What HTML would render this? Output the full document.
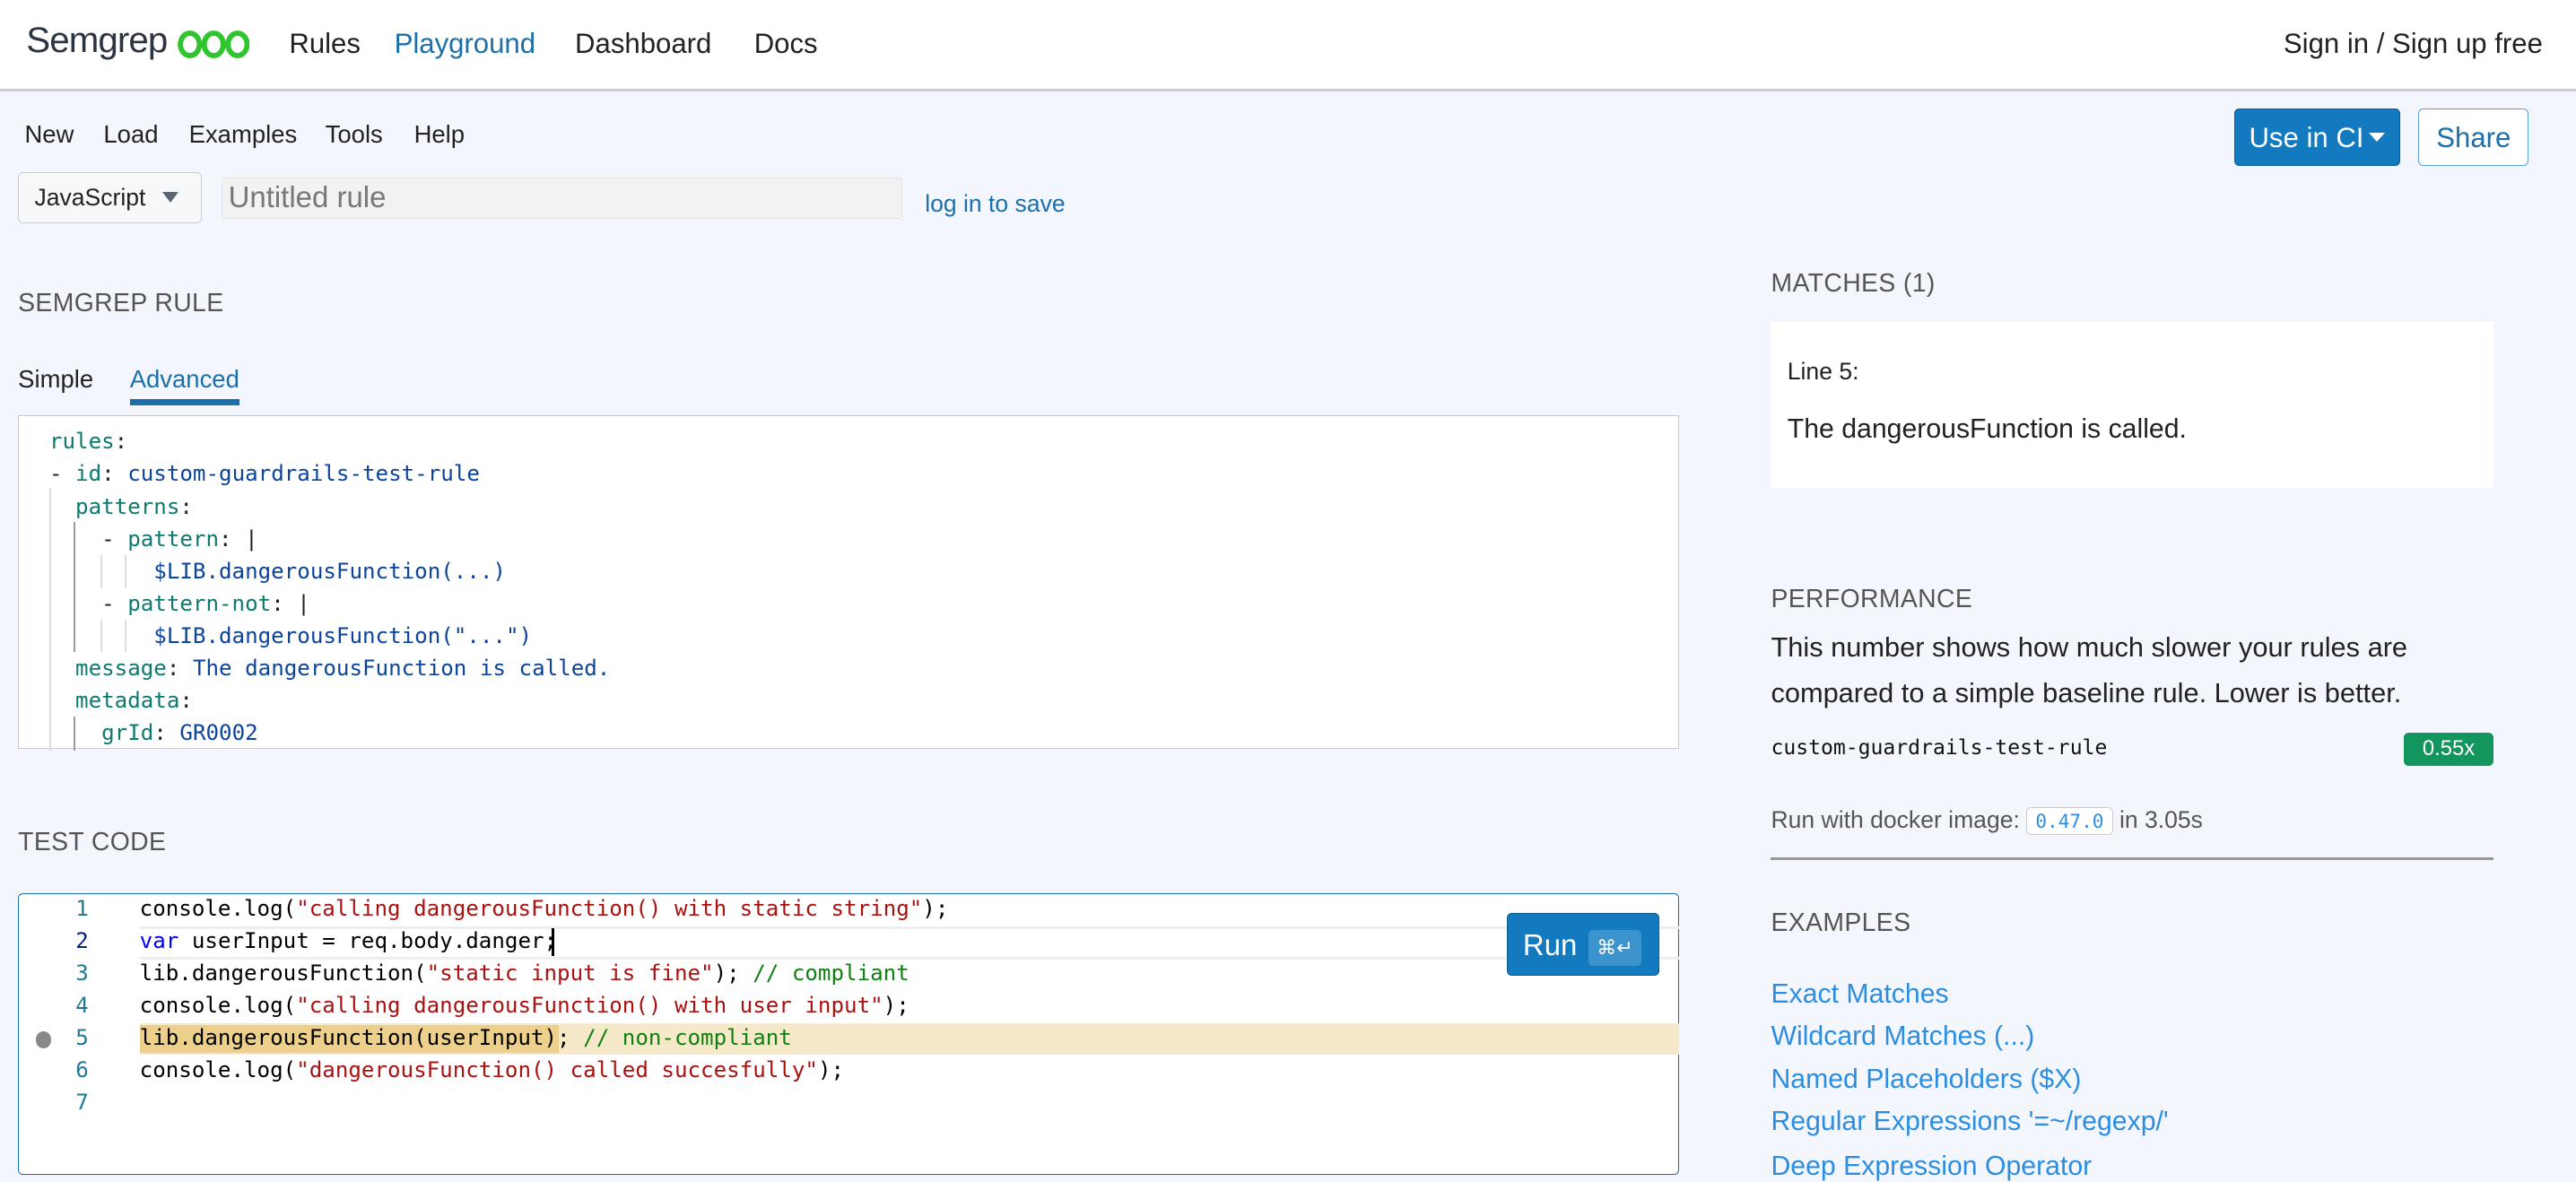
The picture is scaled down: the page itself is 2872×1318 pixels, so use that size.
<!DOCTYPE html>
<html><head><meta charset="utf-8">
<style>
html{zoom:1.8316}
body{margin:0;width:1568px;height:706px;overflow:hidden;background:#f3f7fd;font-family:"Liberation Sans",sans-serif;position:relative;color:#222}
.a{position:absolute;white-space:nowrap}
pre.a{white-space:pre}
.hdr{position:absolute;left:0;top:0;width:1568px;height:54px;background:#fff;border-bottom:2px solid #c9ccd0}
.nav{font-size:17px;top:17px;color:#222}
.mono{font-family:"DejaVu Sans Mono","Liberation Mono",monospace}
.h{font-size:15.5px;color:#555;letter-spacing:0.2px}
.code{font-size:13.2px;line-height:19.7px}
.k{color:#0e7a6e}.v{color:#0b449a}.s{color:#a11}.c{color:#108010}.kw{color:#00f}
.ex{font-size:16.5px;color:#2d8ee0}
</style></head><body>
<div class="hdr"></div>
<div class="a" style="left:16px;top:12px;font-size:22px;color:#2b3440;letter-spacing:-0.5px">Semgrep</div>
<svg class="a" style="left:108px;top:18px" width="44" height="18" viewBox="0 0 44 18"><g fill="none" stroke="#2ec52e" stroke-width="3.2"><ellipse cx="7.5" cy="9" rx="5.8" ry="6.8"/><ellipse cx="22" cy="9" rx="5.8" ry="6.8"/><ellipse cx="36.5" cy="9" rx="5.8" ry="6.8"/></g></svg>
<div class="a nav" style="left:176px">Rules</div>
<div class="a nav" style="left:240px;color:#1c6fa9">Playground</div>
<div class="a nav" style="left:350px">Dashboard</div>
<div class="a nav" style="left:459px">Docs</div>
<div class="a nav" style="left:1390px">Sign in / Sign up free</div>

<div class="a" style="left:15px;top:73px;font-size:15px">New</div>
<div class="a" style="left:63px;top:73px;font-size:15px">Load</div>
<div class="a" style="left:115px;top:73px;font-size:15px">Examples</div>
<div class="a" style="left:198px;top:73px;font-size:15px">Tools</div>
<div class="a" style="left:252px;top:73px;font-size:15px">Help</div>

<div class="a" style="left:11px;top:105px;width:111px;height:30px;border:1px solid #c9cdd2;border-radius:3px;background:#f7f8fa"></div>
<div class="a" style="left:21px;top:112px;font-size:14.5px">JavaScript</div>
<div class="a" style="left:99px;top:117px;width:0;height:0;border-left:5px solid transparent;border-right:5px solid transparent;border-top:7px solid #5a6572"></div>
<div class="a" style="left:135px;top:108px;width:413px;height:24px;background:#f2f2f2;border:1px solid #e4e4e4;border-radius:2px"></div>
<div class="a" style="left:139px;top:110px;font-size:18px;color:#777">Untitled rule</div>
<div class="a" style="left:563px;top:116px;font-size:14.5px;color:#1c6fa9">log in to save</div>

<div class="a" style="left:1360px;top:66px;width:100px;height:34px;background:#137abf;border:1px solid #0e5a8c;border-radius:3px"></div>
<div class="a" style="left:1369px;top:74px;font-size:17px;color:#fff">Use in CI</div>
<div class="a" style="left:1442px;top:81px;border-left:5px solid transparent;border-right:5px solid transparent;border-top:6px solid #fff"></div>
<div class="a" style="left:1472px;top:66px;width:66px;height:34px;background:#fff;border:1px solid #5aa0d6;border-radius:3px"></div>
<div class="a" style="left:1483px;top:74px;font-size:17px;color:#1c6fa9">Share</div>

<div class="a h" style="left:11px;top:176px">SEMGREP RULE</div>
<div class="a" style="left:11px;top:222px;font-size:15px">Simple</div>
<div class="a" style="left:79px;top:222px;font-size:15px;color:#1c6fa9">Advanced</div>
<div class="a" style="left:79px;top:243px;width:67px;height:4px;background:#1c6fa9"></div>

<div class="a" style="left:11px;top:253px;width:1010px;height:202px;background:#fff;border:1px solid #c8c8c8"></div>
<div class="a" style="left:30px;top:297px;width:1px;height:160px;background:#ddd"></div>
<div class="a" style="left:45px;top:318px;width:1px;height:79px;background:#999"></div>
<div class="a" style="left:61px;top:338px;width:1px;height:20px;background:#ddd"></div>
<div class="a" style="left:76px;top:338px;width:1px;height:20px;background:#ddd"></div>
<div class="a" style="left:61px;top:377px;width:1px;height:20px;background:#ddd"></div>
<div class="a" style="left:76px;top:377px;width:1px;height:20px;background:#ddd"></div>
<div class="a" style="left:45px;top:436px;width:1px;height:21px;background:#999"></div>
<pre class="a mono code" style="left:30px;top:259px;margin:0"><span class="k">rules</span>:
- <span class="k">id</span>: <span class="v">custom-guardrails-test-rule</span>
  <span class="k">patterns</span>:
    - <span class="k">pattern</span>: |
        <span class="v">$LIB.dangerousFunction(...)</span>
    - <span class="k">pattern-not</span>: |
        <span class="v">$LIB.dangerousFunction("...")</span>
  <span class="k">message</span>: <span class="v">The dangerousFunction is called.</span>
  <span class="k">metadata</span>:
    <span class="k">grId</span>: <span class="v">GR0002</span></pre>

<div class="a h" style="left:11px;top:504px">TEST CODE</div>
<div class="a" style="left:11px;top:544px;width:1010px;height:170px;background:#fff;border:1px solid #1b6ea8;border-radius:3px"></div>
<div class="a" style="left:85px;top:564px;width:937px;height:17px;border-top:2px solid #eee;border-bottom:2px solid #eee"></div>
<div class="a" style="left:85px;top:623px;width:937px;height:19px;background:#f6e9c9"></div>
<div class="a" style="left:85px;top:624px;width:255px;height:17px;background:#ecd08b"></div>
<div class="a" style="left:22px;top:628px;width:9px;height:10px;border-radius:50%;background:#888"></div>
<div class="a" style="left:336px;top:565px;width:1.5px;height:17px;background:#000"></div>
<pre class="a mono code" style="left:46px;top:543px;margin:0;color:#237893">1
<span style="color:#0b216f">2</span>
3
4
5
6
7</pre>
<pre class="a mono code" style="left:85px;top:543px;margin:0;color:#000">console.log(<span class="s">"calling dangerousFunction() with static string"</span>);
<span class="kw">var</span> userInput = req.body.danger;
lib.dangerousFunction(<span class="s">"static input is fine"</span>); <span class="c">// compliant</span>
console.log(<span class="s">"calling dangerousFunction() with user input"</span>);
lib.dangerousFunction(userInput); <span class="c">// non-compliant</span>
console.log(<span class="s">"dangerousFunction() called succesfully"</span>);
</pre>
<div class="a" style="left:917px;top:556px;width:92px;height:37px;background:#137abf;border:1px solid #0e5a8c;border-radius:3px"></div>
<div class="a" style="left:927px;top:565px;font-size:18px;color:#fff">Run</div>
<div class="a" style="left:967px;top:566px;width:32px;height:22px;background:#3d93cc;border-radius:3px;color:#fff;font-size:12px;text-align:center;line-height:22px">⌘↵</div>

<div class="a h" style="left:1078px;top:164px">MATCHES (1)</div>
<div class="a" style="left:1078px;top:196px;width:440px;height:101px;background:#fff"></div>
<div class="a" style="left:1088px;top:218px;font-size:14.5px">Line 5:</div>
<div class="a" style="left:1088px;top:252px;font-size:16.5px">The dangerousFunction is called.</div>

<div class="a h" style="left:1078px;top:356px">PERFORMANCE</div>
<div class="a" style="left:1078px;top:380px;font-size:16.8px;line-height:28px">This number shows how much slower your rules are<br>compared to a simple baseline rule. Lower is better.</div>
<div class="a mono" style="left:1078px;top:448px;font-size:12.6px;color:#111">custom-guardrails-test-rule</div>
<div class="a" style="left:1463px;top:446px;width:55px;height:20px;background:#12965d;border-radius:3px;color:#fff;font-size:13px;text-align:center;line-height:20px">0.55x</div>
<div class="a" style="left:1078px;top:491px;font-size:14.5px;color:#555">Run with docker image: <span class="mono" style="display:inline-block;border:1px solid #ccc;border-radius:3px;background:#fff;color:#2d8ee0;font-size:11.5px;padding:1px 5px">0.47.0</span> in 3.05s</div>
<div class="a" style="left:1078px;top:522px;width:440px;height:1.5px;background:#999"></div>
<div class="a h" style="left:1078px;top:553px">EXAMPLES</div>
<div class="a ex" style="left:1078px;top:596px">Exact Matches</div>
<div class="a ex" style="left:1078px;top:622px">Wildcard Matches (...)</div>
<div class="a ex" style="left:1078px;top:648px">Named Placeholders ($X)</div>
<div class="a ex" style="left:1078px;top:674px">Regular Expressions '=~/regexp/'</div>
<div class="a ex" style="left:1078px;top:701px">Deep Expression Operator</div>
</body></html>
